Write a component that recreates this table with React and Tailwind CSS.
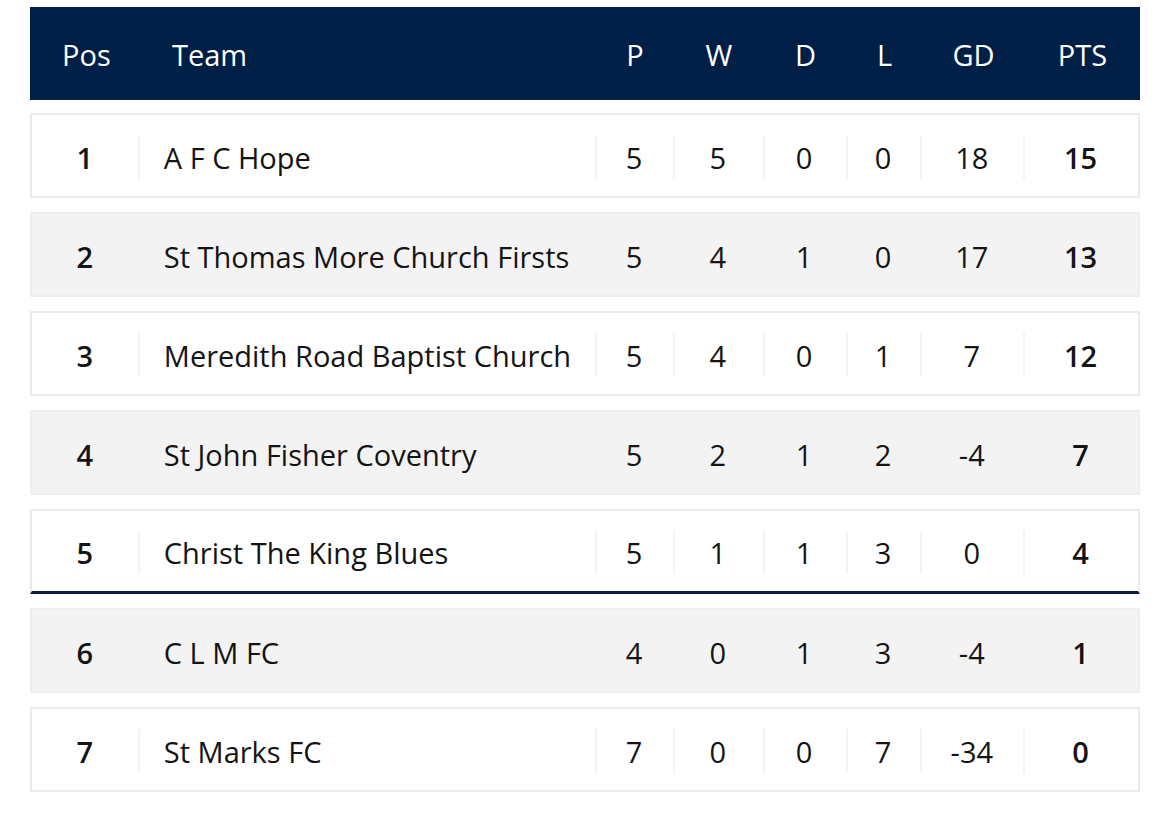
import React from "react";

const rows = [
  { pos: 1, team: "A F C Hope", p: 5, w: 5, d: 0, l: 0, gd: 18, pts: 15 },
  { pos: 2, team: "St Thomas More Church Firsts", p: 5, w: 4, d: 1, l: 0, gd: 17, pts: 13 },
  { pos: 3, team: "Meredith Road Baptist Church", p: 5, w: 4, d: 0, l: 1, gd: 7, pts: 12 },
  { pos: 4, team: "St John Fisher Coventry", p: 5, w: 2, d: 1, l: 2, gd: -4, pts: 7 },
  { pos: 5, team: "Christ The King Blues", p: 5, w: 1, d: 1, l: 3, gd: 0, pts: 4, cut: true },
  { pos: 6, team: "C L M FC", p: 4, w: 0, d: 1, l: 3, gd: -4, pts: 1 },
  { pos: 7, team: "St Marks FC", p: 7, w: 0, d: 0, l: 7, gd: -34, pts: 0 },
];

const cols = ["w-[78px]", "w-[90px]", "w-[83px]", "w-[75px]", "w-[103px]", "w-[115px]"];

function Cell({ className, children, divider = true }) {
  return (
    <div className={`relative flex h-full items-center justify-center pt-[4px] ${className}`}>
      {divider && <span className="absolute left-0 top-[20px] bottom-[17px] w-[2px] bg-[#f4f4f4]" />}
      {children}
    </div>
  );
}

export default function App() {
  return (
    <div className="min-h-[817px] bg-white px-[30px] pt-[7px] font-['Open_Sans',sans-serif] text-[#141414]">
      <div className="flex h-[93px] items-center bg-[#001f47] pt-[2px] text-[29px] text-white">
        <div className="w-[108px] pl-[32px]">Pos</div>
        <div className="w-[458px] pl-[34px]">Team</div>
        {["P", "W", "D", "L", "GD", "PTS"].map((h, i) => (
          <div key={h} className={`${cols[i]} text-center`}>{h}</div>
        ))}
      </div>

      <div className="mt-[13px] flex flex-col gap-[14px]">
        {rows.map((r, idx) => (
          <div
            key={r.pos}
            className={`flex h-[85px] items-stretch border-2 ${idx % 2 ? "bg-[#f3f3f3] border-[#eeeeee]" : "bg-white border-[#ebebeb]"} ${r.cut ? "border-b-[3px] border-b-[#0a1f3d]" : ""} text-[29px]`}
          >
            <Cell className="w-[106px] font-semibold" divider={false}>{r.pos}</Cell>
            <Cell className="w-[458px] !justify-start pl-[26px]">{r.team}</Cell>
            <Cell className={cols[0]}>{r.p}</Cell>
            <Cell className={cols[1]}>{r.w}</Cell>
            <Cell className={cols[2]}>{r.d}</Cell>
            <Cell className={cols[3]}>{r.l}</Cell>
            <Cell className={cols[4]}>{r.gd}</Cell>
            <Cell className={`${cols[5]} font-semibold`}>{r.pts}</Cell>
          </div>
        ))}
      </div>
    </div>
  );
}
